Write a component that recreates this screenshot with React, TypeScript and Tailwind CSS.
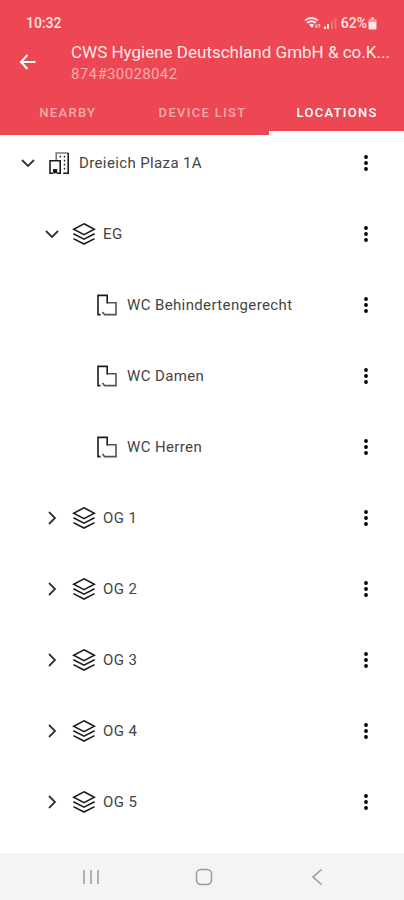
import type { ReactNode } from 'react';
import clsx from 'clsx';

type NodeKind = 'building' | 'floor' | 'room';

interface LocationNode {
  name: string;
  kind: NodeKind;
  open?: boolean;
}

const TABS = ['Nearby', 'Device list', 'Locations'];
const ACTIVE_TAB = 'Locations';

const LOCATIONS: LocationNode[] = [
  { name: 'Dreieich Plaza 1A', kind: 'building', open: true },
  { name: 'EG', kind: 'floor', open: true },
  { name: 'WC Behindertengerecht', kind: 'room' },
  { name: 'WC Damen', kind: 'room' },
  { name: 'WC Herren', kind: 'room' },
  { name: 'OG 1', kind: 'floor', open: false },
  { name: 'OG 2', kind: 'floor', open: false },
  { name: 'OG 3', kind: 'floor', open: false },
  { name: 'OG 4', kind: 'floor', open: false },
  { name: 'OG 5', kind: 'floor', open: false },
];

const INDENT: Record<NodeKind, string> = {
  building: 'pl-4',
  floor: 'pl-10',
  room: 'pl-24',
};

export default function App() {
  return (
    <div className="flex min-h-screen flex-col bg-white font-['Roboto','Liberation_Sans',sans-serif]">
      <header className="bg-[#ec4753] text-white">
        <StatusBar />
        <TitleBar />
        <nav className="grid h-12 grid-cols-3">
          {TABS.map((tab) => (
            <button
              key={tab}
              type="button"
              className={clsx(
                'border-b-4 pl-px pt-2 text-[13px] font-medium uppercase tracking-widest',
                tab === ACTIVE_TAB ? 'border-white text-white' : 'border-transparent text-[#f8a9ab]',
              )}
            >
              {tab}
            </button>
          ))}
        </nav>
      </header>

      <main className="flex-1">
        <ul className="flex flex-col gap-[15px]">
          {LOCATIONS.map((node) => (
            <LocationRow key={node.name} node={node} />
          ))}
        </ul>
      </main>

      <SystemNav />
    </div>
  );
}

function StatusBar() {
  return (
    <div className="flex h-9 items-center justify-between pl-[26px] pr-[27px] pt-[10px] text-sm font-medium text-[#ffe4e2]">
      <span>10:32</span>
      <div className="flex items-center gap-[3px]">
        <svg width="17" height="14" viewBox="0 0 17 14" fill="none" stroke="currentColor">
          <path d="M1 4.6C4.6 1 10.4 1 14 4.6" strokeWidth="2" />
          <path d="M3.2 7C5.6 4.6 9.4 4.6 11.8 7" strokeWidth="2" />
          <path d="M5 8.8c1.5-1.4 3.5-1.4 5 0L8.2 12z" fill="currentColor" stroke="none" />
          <path d="M12.2 8v3.6M10.9 10.4l1.3 1.4 1.3-1.4M15.2 11.8V8.2M14 9.4l1.2-1.3 1.2 1.3" strokeWidth="0.9" />
        </svg>
        <svg width="13" height="12" viewBox="0 0 13 12" fill="currentColor">
          <path d="M0 9.5h2V12H0zM3 7h2v5H3z" />
          <path d="M7 4h2v8H7zM10.5 1h2v11h-2z" opacity="0.3" />
        </svg>
        <div className="ml-px flex items-center gap-px">
          <span>62%</span>
          <svg width="9" height="13" viewBox="0 0 9 13" fill="currentColor">
            <path d="M3 0.5h3V2H3z" />
            <path d="M1.5 2h6a1 1 0 0 1 1 1v2.5h-8V3a1 1 0 0 1 1-1z" opacity="0.5" />
            <path d="M0.5 5h8v6.5a1 1 0 0 1-1 1h-6a1 1 0 0 1-1-1z" />
          </svg>
        </div>
      </div>
    </div>
  );
}

function TitleBar() {
  return (
    <div className="flex h-[51px] items-center pl-4 pr-2">
      <button type="button" aria-label="Back" className="mr-[31px] flex size-6 shrink-0 items-center justify-center">
        <svg width="18" height="18" viewBox="0 0 18 18" fill="none" stroke="currentColor" strokeWidth="2">
          <path d="M16.5 9H2.5M8.5 2L1.9 9l6.6 7" />
        </svg>
      </button>
      <div className="min-w-0">
        <h1 className="truncate text-[17px] leading-6 text-[#ffe9e7]">CWS Hygiene Deutschland GmbH &amp; co.K...</h1>
        <p className="text-[15px] leading-5 tracking-wide text-[#f9aaab]">874#30028042</p>
      </div>
    </div>
  );
}

function LocationRow({ node }: { node: LocationNode }) {
  return (
    <li className={clsx('flex h-14 items-center pr-[26px]', INDENT[node.kind])}>
      {node.kind !== 'room' ? (
        <button
          type="button"
          aria-label={node.open ? `Collapse ${node.name}` : `Expand ${node.name}`}
          aria-expanded={node.open}
          className="mr-2 flex size-6 items-center justify-center text-[#333333]"
        >
          <Chevron open={node.open} />
        </button>
      ) : null}
      <NodeIcon kind={node.kind} />
      <span className="ml-[7px] flex-1 truncate pt-px text-[15px] tracking-wide text-[#444444]">{node.name}</span>
      <button
        type="button"
        aria-label={`Options for ${node.name}`}
        className="flex size-6 items-center justify-center text-black"
      >
        <svg width="4" height="16" viewBox="0 0 4 16" fill="currentColor">
          <circle cx="2" cy="2" r="1.9" />
          <circle cx="2" cy="8" r="1.9" />
          <circle cx="2" cy="14" r="1.9" />
        </svg>
      </button>
    </li>
  );
}

function Chevron({ open }: { open?: boolean }) {
  return (
    <svg width="14" height="14" viewBox="0 0 14 14" fill="none" stroke="currentColor" strokeWidth="1.8">
      <path d={open ? 'M1 4l6 6 6-6' : 'M4 1l6 6-6 6'} />
    </svg>
  );
}

function NodeIcon({ kind }: { kind: NodeKind }) {
  if (kind === 'building') {
    return (
      <IconFrame>
        <path d="M8.2 9V2h12" stroke="#777777" />
        <path d="M20.2 2v20.2h-5" />
        <path d="M2 9.8h10.2v12.4H9M5 22.2H2V9" />
        <path d="M5.8 22.2v-3.4h2.6v3.4" fill="#1c1c1c" />
        <path d="M11.6 5.6h1.4M15.8 5.6h1.4M15.8 9.6h1.4M15.8 13.6h1.4M15.8 17.6h1.4" />
      </IconFrame>
    );
  }
  if (kind === 'floor') {
    return (
      <IconFrame>
        <path d="M12 1.8l10.4 5.4L12 12.6 1.6 7.2z" />
        <path d="M1.4 11.8L12 17.2l10.6-5.4M1.4 16.6L12 22l10.6-5.4" />
      </IconFrame>
    );
  }
  return (
    <IconFrame>
      <path d="M11.2 9.8h8.8v11.8H8.6L6.4 19" stroke="#555555" />
      <path d="M4.6 21.6H2V2.4h9.2v8.2" />
    </IconFrame>
  );
}

function IconFrame({ children }: { children: ReactNode }) {
  return (
    <svg
      width="24"
      height="24"
      viewBox="0 0 24 24"
      fill="none"
      stroke="#1c1c1c"
      strokeWidth="1.6"
      className="shrink-0"
    >
      {children}
    </svg>
  );
}

function SystemNav() {
  return (
    <footer className="flex h-[47px] items-center justify-center gap-[89px] bg-[#f4f4f4] pl-1 text-[#999999]">
      <button type="button" aria-label="Recent apps" className="flex size-6 items-center justify-center">
        <svg width="16" height="16" viewBox="0 0 16 16" stroke="currentColor" strokeWidth="1.5">
          <path d="M1 1v14M8 1v14M15 1v14" />
        </svg>
      </button>
      <button type="button" aria-label="Home" className="flex size-6 items-center justify-center">
        <svg width="18" height="18" viewBox="0 0 18 18" fill="none" stroke="currentColor" strokeWidth="1.5">
          <rect x="1.5" y="1.5" width="15" height="15" rx="4.5" />
        </svg>
      </button>
      <button type="button" aria-label="Back" className="flex size-6 items-center justify-center">
        <svg width="16" height="16" viewBox="0 0 16 16" fill="none" stroke="currentColor" strokeWidth="1.5">
          <path d="M12.5 0.5L4 8l8.5 7.5" />
        </svg>
      </button>
    </footer>
  );
}
